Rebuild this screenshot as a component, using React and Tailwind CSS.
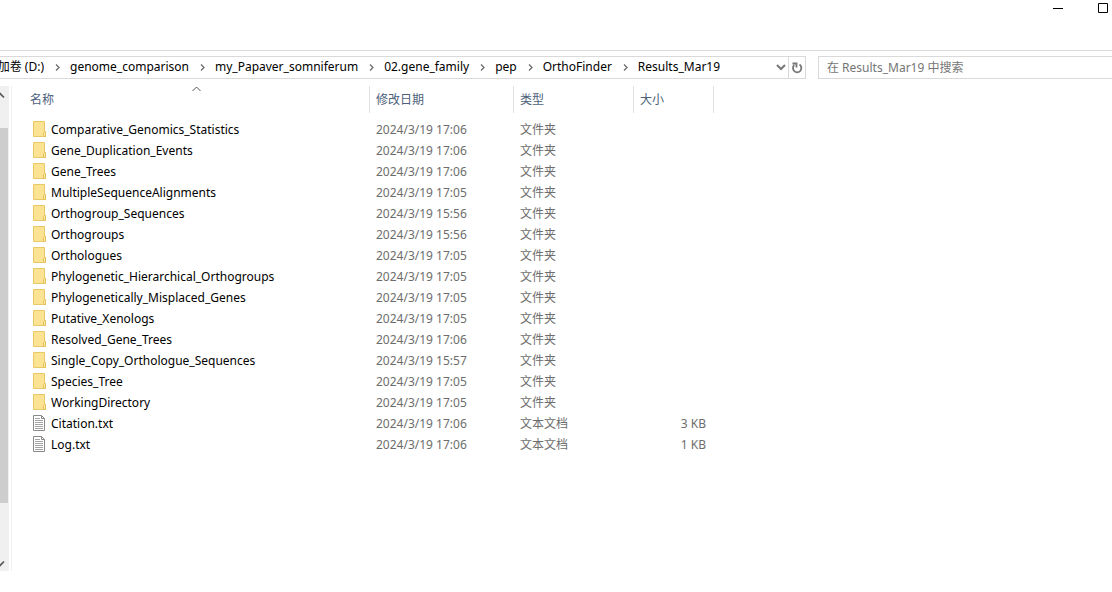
import { useState } from "react";

const crumbs = ["genome_comparison", "my_Papaver_somniferum", "02.gene_family", "pep", "OrthoFinder", "Results_Mar19"];

const files = [
  { name: "Comparative_Genomics_Statistics", date: "2024/3/19 17:06" },
  { name: "Gene_Duplication_Events", date: "2024/3/19 17:06" },
  { name: "Gene_Trees", date: "2024/3/19 17:06" },
  { name: "MultipleSequenceAlignments", date: "2024/3/19 17:05" },
  { name: "Orthogroup_Sequences", date: "2024/3/19 15:56" },
  { name: "Orthogroups", date: "2024/3/19 15:56" },
  { name: "Orthologues", date: "2024/3/19 17:05" },
  { name: "Phylogenetic_Hierarchical_Orthogroups", date: "2024/3/19 17:05" },
  { name: "Phylogenetically_Misplaced_Genes", date: "2024/3/19 17:05" },
  { name: "Putative_Xenologs", date: "2024/3/19 17:05" },
  { name: "Resolved_Gene_Trees", date: "2024/3/19 17:06" },
  { name: "Single_Copy_Orthologue_Sequences", date: "2024/3/19 15:57" },
  { name: "Species_Tree", date: "2024/3/19 17:05" },
  { name: "WorkingDirectory", date: "2024/3/19 17:05" },
  { name: "Citation.txt", date: "2024/3/19 17:06", size: "3 KB" },
  { name: "Log.txt", date: "2024/3/19 17:06", size: "1 KB" },
];

function FolderIcon() {
  return (
    <svg className="mb-0.5 shrink-0" width="14" height="16" viewBox="0 0 14 16" aria-hidden="true">
      <path d="M0.5 0.5h11v10h1v5h-12z" fill="#fce394" stroke="#e9c966" />
      <path d="M10.5 15.5v-4l1-1h1v5z" fill="#fdeaa8" stroke="#e3c05a" />
    </svg>
  );
}

function TextIcon() {
  return (
    <svg className="mb-0.5 shrink-0" width="14" height="16" viewBox="0 0 14 16" aria-hidden="true">
      <path d="M0.5 0.5h8l3 3v12h-11z" fill="#fff" stroke="#8a8a8a" />
      <path d="M8.5 0.5v3h3" fill="none" stroke="#8a8a8a" />
      <path d="M2 3.5h5M2 5.5h8M2 7.5h8M2 9.5h8M2 11.5h8M2 13.5h8" stroke="#a3a3a3" />
    </svg>
  );
}

function CrumbArrow() {
  return (
    <svg className="mr-2.5 ml-[11px] shrink-0" width="5" height="7" viewBox="0 0 5 7" aria-hidden="true">
      <path d="M1 0.5l3 3-3 3" fill="none" stroke="#6d6d6d" strokeWidth="1.3" />
    </svg>
  );
}

function Column({ title, sorted }) {
  return (
    <th scope="col" className="p-0 pb-1.5 font-normal">
      <button className="relative flex h-[27px] w-full items-center border-r border-[#e2e2e2] pl-1.5 text-[#4c607a]">
        {title}
        {sorted && (
          <svg className="absolute inset-x-0 top-0 mx-auto" width="9" height="6" viewBox="0 0 9 6" aria-hidden="true">
            <path d="M0.5 5l4-4 4 4" fill="none" stroke="#555" />
          </svg>
        )}
      </button>
    </th>
  );
}

export default function App() {
  const [query, setQuery] = useState("");

  return (
    <main className="min-h-screen overflow-hidden bg-white font-['Noto_Sans','Noto_Sans_CJK_SC',sans-serif] text-xs text-black">
      <header className="flex h-[51px] items-start justify-end gap-[35px] border-b border-[#dadada] pt-[3px] pr-1">
        <button aria-label="最小化">
          <svg width="10" height="10" viewBox="0 0 10 10"><path d="M0 5.5h10" stroke="#000" /></svg>
        </button>
        <button aria-label="最大化">
          <svg width="10" height="10" viewBox="0 0 10 10"><path d="M0.5 0.5h9v9h-9z" fill="none" stroke="#000" /></svg>
        </button>
      </header>

      <div className="mt-[5px] grid grid-cols-[minmax(0,806fr)_minmax(0,294fr)] gap-3">
        <nav className="flex h-[23px] items-stretch border border-l-0 border-[#d9d9d9]">
          <div className="flex flex-1 items-center overflow-hidden pb-px whitespace-nowrap">
            <div className="flex w-11 shrink-0 justify-end overflow-hidden">
              <button className="shrink-0">加卷 (D:)</button>
            </div>
            {crumbs.map((c) => (
              <div key={c} className="flex items-center">
                <CrumbArrow />
                <button>{c}</button>
              </div>
            ))}
          </div>
          <button className="flex w-3.5 items-center justify-center" aria-label="以前的位置">
            <svg width="10" height="7" viewBox="0 0 10 7"><path d="M1 1l4 4 4-4" fill="none" stroke="#777" strokeWidth="2" /></svg>
          </button>
          <button className="flex w-[17px] items-center justify-end border-l border-[#d9d9d9] pr-0.5" aria-label="刷新">
            <svg width="12" height="12" viewBox="0 0 12 12">
              <path d="M8.5 2.6a4.2 4.2 0 1 1-5.200 0.400" fill="none" stroke="#777" strokeWidth="1.8" />
              <path d="M1.500 1.500h4v4" fill="none" stroke="#777" strokeWidth="1.8" />
            </svg>
          </button>
        </nav>
        <input
          className="h-[23px] w-full border border-r-0 border-[#d9d9d9] px-2 outline-none placeholder:text-[#757575]"
          aria-label="搜索"
          placeholder="在 Results_Mar19 中搜索"
          value={query}
          onChange={(e) => setQuery(e.target.value)}
        />
      </div>

      <div className="mt-[7px] flex">
        <div className="flex w-[9px] shrink-0 flex-col bg-[#f0f0f0]">
          <svg className="my-1.5" width="5" height="7" viewBox="0 0 5 7" aria-hidden="true">
            <path d="M-3 5l3-3.500 4 4" fill="none" stroke="#555" strokeWidth="1.6" />
          </svg>
          <div className="mt-[23px] mr-px h-[375px] bg-[#cdcdcd]" />
          <svg className="mt-auto mb-1" width="5" height="7" viewBox="0 0 5 7" aria-hidden="true">
            <path d="M-3 2l3 3.500 4-4" fill="none" stroke="#555" strokeWidth="1.6" />
          </svg>
        </div>
        <div className="ml-0.5 min-h-[485px] flex-1 border-l border-[#f2f2f2] pl-3">
          <table className="w-[690px] table-fixed border-collapse text-left">
            <colgroup>
              <col className="w-[346px]" />
              <col className="w-36" />
              <col className="w-[120px]" />
              <col className="w-20" />
            </colgroup>
            <thead>
              <tr>
                <Column title="名称" sorted />
                <Column title="修改日期" />
                <Column title="类型" />
                <Column title="大小" />
              </tr>
            </thead>
            <tbody className="text-[#6d6d6d]">
              {files.map((f) => (
                <tr key={f.name} className="h-[21px]">
                  <td className="p-0 pl-[9px] text-black">
                    <div className="flex items-center gap-1">
                      {f.size ? <TextIcon /> : <FolderIcon />}
                      {f.name}
                    </div>
                  </td>
                  <td className="p-0 pl-1.5">{f.date}</td>
                  <td className="p-0 pl-1.5">{f.size ? "文本文档" : "文件夹"}</td>
                  <td className="p-0 pr-2 text-right">{f.size}</td>
                </tr>
              ))}
            </tbody>
          </table>
        </div>
      </div>
    </main>
  );
}
